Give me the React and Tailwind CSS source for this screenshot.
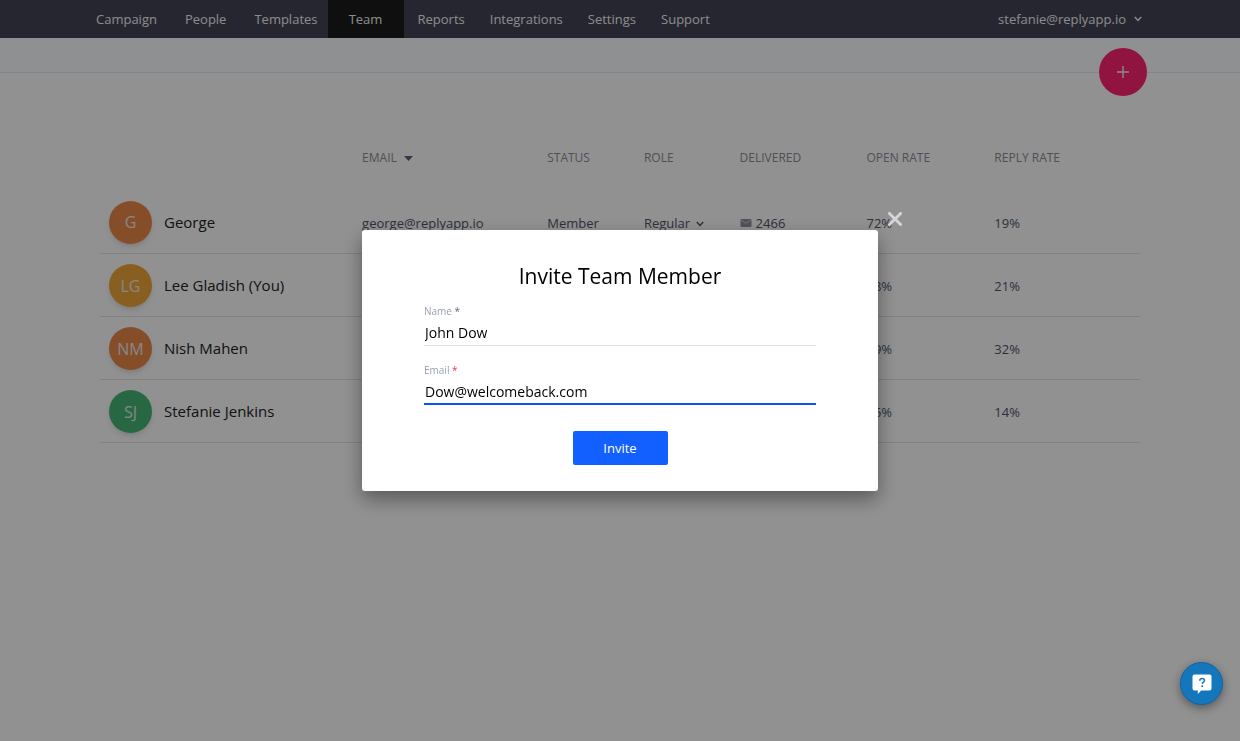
import React from "react";

const leftLinks = ["Campaign", "People", "Templates"];
const rightLinks = ["Reports", "Integrations", "Settings", "Support"];

const members = [
  { initials: "G", name: "George", email: "george@replyapp.io", status: "Member", delivered: 2466, open: "72%", reply: "19%", color: "bg-[#ea8a48]" },
  { initials: "LG", name: "Lee Gladish (You)", email: "lee@replyapp.io", status: "Owner", delivered: 1820, open: "68%", reply: "21%", color: "bg-[#efa73b]" },
  { initials: "NM", name: "Nish Mahen", email: "nish@replyapp.io", status: "Member", delivered: 1642, open: "59%", reply: "32%", color: "bg-[#ea8a48]" },
  { initials: "SJ", name: "Stefanie Jenkins", email: "stefanie@replyapp.io", status: "Member", delivered: 1204, open: "65%", reply: "14%", color: "bg-[#46b877]" },
];

function Chevron({ className }) {
  return (
    <svg className={className} viewBox="0 0 8 6" fill="none" stroke="currentColor" strokeWidth="1.5" aria-hidden="true">
      <path d="M0.8 1 4 4.4 7.2 1" />
    </svg>
  );
}

function NavLink({ children, className = "" }) {
  return (
    <a href="#" className={`flex items-center ${className}`}>
      {children}
    </a>
  );
}

function Header() {
  return (
    <header className="bg-[#444356] text-[13px] text-[#f4f4f4]">
      <div className="mx-auto flex h-[38px] max-w-[1048px] items-stretch justify-between leading-[38px]">
        <nav className="flex" aria-label="Main">
          <div className="flex gap-7 pr-[10px]">
            {leftLinks.map((t) => (
              <NavLink key={t}>{t}</NavLink>
            ))}
          </div>
          <NavLink className="w-[76px] justify-center bg-[#1c1c1c]">Team</NavLink>
          <div className="flex gap-[25px] pl-[14px]">
            {rightLinks.map((t) => (
              <NavLink key={t}>{t}</NavLink>
            ))}
          </div>
        </nav>
        <button type="button" className="flex items-center gap-2 pr-[2px]">
          stefanie@replyapp.io
          <Chevron className="h-1.5 w-2" />
        </button>
      </div>
    </header>
  );
}

function MembersTable() {
  return (
    <table className="w-full table-fixed text-left text-[13px] text-[#4f546b]">
      <colgroup>
        <col className="w-[25.2%]" />
        <col className="w-[17.8%]" />
        <col className="w-[9.3%]" />
        <col className="w-[9.2%]" />
        <col className="w-[12.2%]" />
        <col className="w-[12.3%]" />
        <col />
      </colgroup>
      <thead>
        <tr className="h-[65px] text-xs text-[#8c8d98]">
          <th className="font-normal" aria-label="Name" />
          <th className="pt-px font-normal">
            <button type="button" className="flex items-center gap-[7px]">
              EMAIL
              <svg className="h-[5px] w-[9px] text-[#5c6178]" viewBox="0 0 9 5" aria-hidden="true">
                <path d="M0 0h9L4.5 5z" fill="currentColor" />
              </svg>
            </button>
          </th>
          <th className="pt-px font-normal">STATUS</th>
          <th className="pt-px font-normal">ROLE</th>
          <th className="pt-px font-normal">DELIVERED</th>
          <th className="pt-px font-normal">OPEN RATE</th>
          <th className="pt-px font-normal">REPLY RATE</th>
        </tr>
      </thead>
      <tbody>
        {members.map((m) => (
          <tr key={m.name} className="h-[63px] border-b border-[#e3e3e3]">
            <td className="pt-[2px] pl-[9px]">
              <div className="flex items-center gap-3 text-[15px] text-[#222222]">
                <span className={`flex size-[43px] items-center justify-center rounded-full text-base text-[#ececec] shadow-md ${m.color}`}>
                  {m.initials}
                </span>
                {m.name}
              </div>
            </td>
            <td className="pt-1">{m.email}</td>
            <td className="pt-1">{m.status}</td>
            <td className="pt-1">
              <div className="relative w-[60px]">
                <select aria-label={`Role of ${m.name}`} className="block w-full appearance-none bg-transparent" defaultValue="Regular">
                  <option>Regular</option>
                  <option>Admin</option>
                </select>
                <Chevron className="pointer-events-none absolute top-[7px] right-0 h-1.5 w-2" />
              </div>
            </td>
            <td className="pt-1">
              <span className="flex items-center gap-1">
                <svg className="h-2 w-3" viewBox="0 0 12 8" aria-hidden="true">
                  <rect x="0.5" width="11" height="8" rx="1" fill="#8f919e" />
                  <path d="M1 1l5 3.4L11 1" stroke="#d4d4da" strokeWidth="0.9" fill="none" />
                </svg>
                {m.delivered}
              </span>
            </td>
            <td className="pt-1">{m.open}</td>
            <td className="pt-1">{m.reply}</td>
          </tr>
        ))}
      </tbody>
    </table>
  );
}

function Field({ id, label, type, value, starClass, lineClass }) {
  return (
    <div className="flex flex-col">
      <label htmlFor={id} className="text-[10px] leading-4 text-[#9a9fb0]">
        {label} <span className={starClass}>*</span>
      </label>
      <input
        id={id}
        type={type}
        defaultValue={value}
        className={`h-[27px] w-full px-px pt-px text-sm text-black outline-none ${lineClass}`}
      />
    </div>
  );
}

function InviteDialog() {
  return (
    <div className="fixed inset-0 flex items-start justify-center bg-black/43 pt-[230px]">
      <div role="dialog" aria-modal="true" aria-labelledby="invite-title" className="relative w-[516px] rounded-[3px] bg-white px-[62px] pt-8 pb-[26px] shadow-[0_8px_20px_rgba(0,0,0,0.4)]">
        <button type="button" aria-label="Close" className="absolute -top-[18px] -right-6 text-[#d6d6d8]">
          <svg className="size-[14px]" viewBox="0 0 14 14" fill="none" stroke="currentColor" strokeWidth="2.8" strokeLinecap="round">
            <path d="M1.4 1.4l11.2 11.2M12.6 1.4L1.4 12.6" />
          </svg>
        </button>
        <h2 id="invite-title" className="text-center text-[21px] leading-7 text-black">Invite Team Member</h2>
        <form className="mt-[13px] flex flex-col gap-4" onSubmit={(e) => e.preventDefault()}>
          <Field id="name" label="Name" type="text" value="John Dow" starClass="text-[#666a78]" lineClass="border-b border-[#dedede]" />
          <Field id="email" label="Email" type="email" value="Dow@welcomeback.com" starClass="text-[#ff2b4f]" lineClass="border-b-2 border-[#0f52f5]" />
          <button type="submit" className="mt-[10px] h-[34px] w-[95px] self-center rounded-[2px] bg-[#1260ff] pt-px text-[13px] text-white">Invite</button>
        </form>
      </div>
    </div>
  );
}

export default function App() {
  return (
    <div className="min-h-screen bg-white font-['Open_Sans',sans-serif]">
      <Header />
      <div className="h-[35px] border-b border-[#e8ecec] bg-[#f9fdff]">
        <div className="mx-auto flex max-w-[1054px] justify-end">
          <button type="button" aria-label="Add team member" className="mt-[10px] flex size-12 items-center justify-center rounded-full bg-[#ff2370] text-[#f4f4f4]">
            <svg className="size-3" viewBox="0 0 12 12" stroke="currentColor" strokeWidth="1.4" aria-hidden="true">
              <path d="M6 0v12M0 6h12" />
            </svg>
          </button>
        </div>
      </div>
      <main className="mx-auto max-w-[1040px] pt-[52px]">
        <MembersTable />
      </main>
      <InviteDialog />
      <button type="button" aria-label="Help" className="fixed right-[17px] bottom-9 flex size-[43px] items-center justify-center rounded-full border border-[#0c62a5] bg-[#1577bb] shadow-[0_3px_10px_rgba(0,0,0,0.4)]">
        <svg className="h-5 w-5" viewBox="0 0 20 20" aria-hidden="true">
          <path d="M2.5 0.5h15a2 2 0 0 1 2 2v12a2 2 0 0 1-2 2H9.2L5.8 20v-3.5H2.5a2 2 0 0 1-2-2v-12a2 2 0 0 1 2-2z" fill="#fff" />
          <path d="M7.8 6.8c0-1.4 1-2.2 2.3-2.2s2.3.8 2.3 2c0 1.6-2.1 1.7-2.1 3.3" fill="none" stroke="#1577bb" strokeWidth="1.5" />
          <rect x="9.4" y="11.3" width="1.7" height="1.7" fill="#1577bb" />
        </svg>
      </button>
    </div>
  );
}
